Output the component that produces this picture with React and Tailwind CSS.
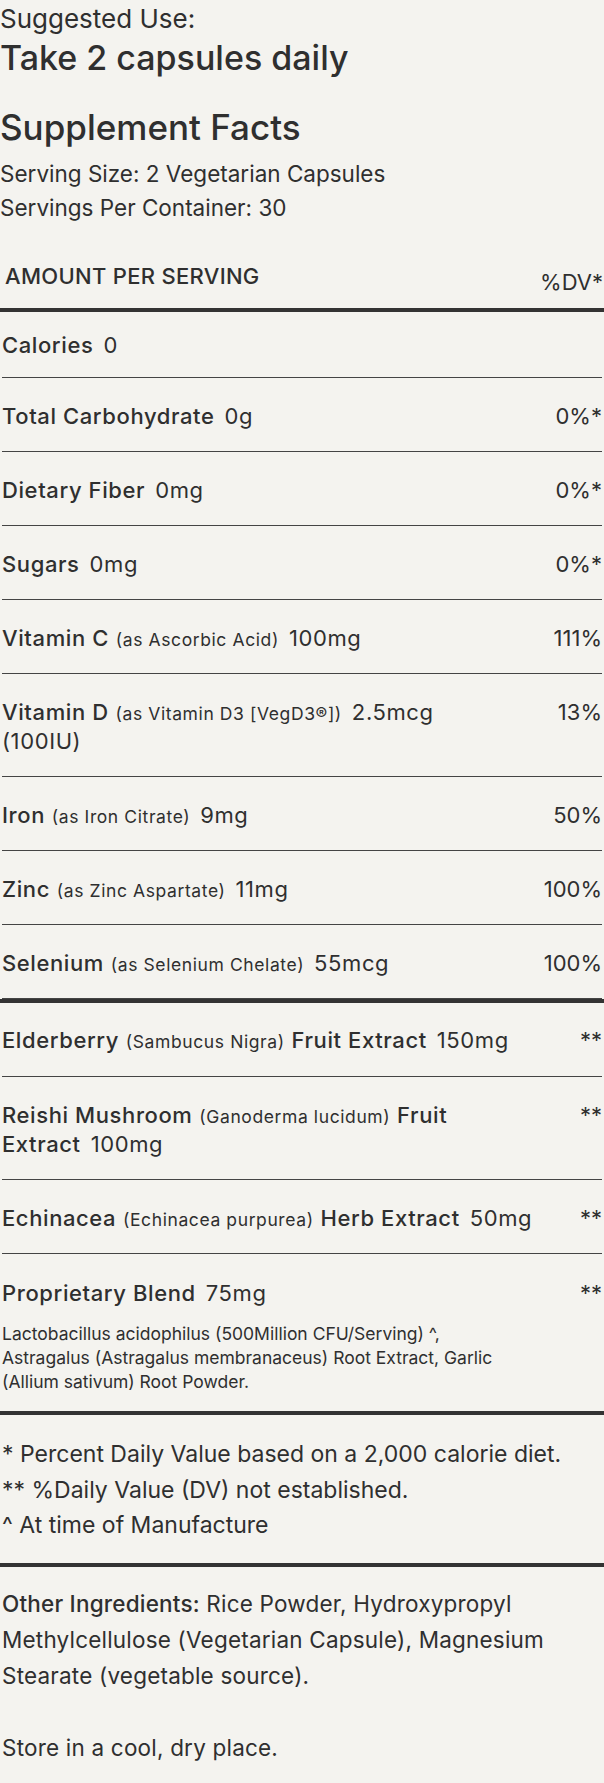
import React from "react";

const Row = ({ children, dv, className = "" }) => (
  <div
    className={`mx-[2px] flex items-start justify-between gap-4 border-b border-[#444] text-[22px] leading-[29px] tracking-[0.6px] ${className}`}
  >
    <div>{children}</div>
    <div className="shrink-0 text-right tracking-normal">{dv}</div>
  </div>
);

const Name = ({ children }) => <span className="font-medium">{children}</span>;
const Note = ({ children }) => <span className="text-[17.5px] leading-none">{children}</span>;
const Amt = ({ children }) => <span className="ml-[10px]">{children}</span>;

const ThickLine = () => <div className="h-[4px] bg-[#333]" />;

export default function App() {
  return (
    <div
      className="min-h-screen bg-[#f4f3ef] text-[#2f2f2f]"
      style={{ fontFamily: "Inter, 'Noto Sans', sans-serif" }}
    >
      {/* Suggested use */}
      <p className="pt-[4px] text-[26px] leading-[30px]">Suggested Use:</p>
      <p className="mt-[4px] text-[34px] leading-[40px] font-medium">Take 2 capsules daily</p>

      {/* Facts heading */}
      <h2 className="mt-[29px] text-[35px] leading-[40px] font-medium">Supplement Facts</h2>
      <div className="mt-[10px] text-[22.5px] leading-[34px]">
        <p>Serving Size: 2 Vegetarian Capsules</p>
        <p>Servings Per Container: 30</p>
      </div>

      <div className="mt-[38px] flex items-end justify-between pb-[13px] text-[22px] leading-[26px]">
        <span className="pl-[5px] pb-[6px] font-medium tracking-[0.3px]">AMOUNT PER SERVING</span>
        <span className="pr-[1px]">%DV*</span>
      </div>
      <ThickLine />

      <Row className="pt-[19px] pb-[17px]">
        <Name>Calories</Name>
        <Amt>0</Amt>
      </Row>
      <Row className="pt-[24px] pb-[20px]" dv="0%*">
        <Name>Total Carbohydrate</Name>
        <Amt>0g</Amt>
      </Row>
      <Row className="pt-[24px] pb-[20px]" dv="0%*">
        <Name>Dietary Fiber</Name>
        <Amt>0mg</Amt>
      </Row>
      <Row className="pt-[24px] pb-[20px]" dv="0%*">
        <Name>Sugars</Name>
        <Amt>0mg</Amt>
      </Row>
      <Row className="pt-[24px] pb-[20px]" dv="111%">
        <Name>Vitamin C</Name> <Note>(as Ascorbic Acid)</Note>
        <Amt>100mg</Amt>
      </Row>
      <Row className="pt-[24px] pb-[20px]" dv="13%">
        <Name>Vitamin D</Name> <Note>(as Vitamin D3 [VegD3®])</Note>
        <Amt>2.5mcg</Amt>
        <br />
        (100IU)
      </Row>
      <Row className="pt-[24px] pb-[20px]" dv="50%">
        <Name>Iron</Name> <Note>(as Iron Citrate)</Note>
        <Amt>9mg</Amt>
      </Row>
      <Row className="pt-[24px] pb-[20px]" dv="100%">
        <Name>Zinc</Name> <Note>(as Zinc Aspartate)</Note>
        <Amt>11mg</Amt>
      </Row>
      <Row className="pt-[24px] pb-[20px]" dv="100%">
        <Name>Selenium</Name> <Note>(as Selenium Chelate)</Note>
        <Amt>55mcg</Amt>
      </Row>
      <ThickLine />

      <Row className="pt-[23px] pb-[21px]" dv="**">
        <Name>Elderberry</Name> <Note>(Sambucus Nigra)</Note> <Name>Fruit Extract</Name>
        <Amt>150mg</Amt>
      </Row>
      <Row className="pt-[24px] pb-[20px]" dv="**">
        <Name>Reishi Mushroom</Name> <Note>(Ganoderma lucidum)</Note> <Name>Fruit</Name>
        <br />
        <Name>Extract</Name>
        <Amt>100mg</Amt>
      </Row>
      <Row className="pt-[24px] pb-[20px]" dv="**">
        <Name>Echinacea</Name> <Note>(Echinacea purpurea)</Note> <Name>Herb Extract</Name>
        <Amt>50mg</Amt>
      </Row>

      {/* Proprietary blend */}
      <div className="mx-[2px] pt-[25px] pb-[17px]">
        <div className="flex items-start justify-between text-[22px] leading-[29px] tracking-[0.6px]">
          <div>
            <Name>Proprietary Blend</Name>
            <Amt>75mg</Amt>
          </div>
          <span className="tracking-normal">**</span>
        </div>
        <p className="mt-[14px] text-[17.5px] leading-[24px]">
          Lactobacillus acidophilus (500Million CFU/Serving) ^,
          <br />
          Astragalus (Astragalus membranaceus) Root Extract, Garlic
          <br />
          (Allium sativum) Root Powder.
        </p>
      </div>
      <ThickLine />

      {/* Footnotes */}
      <div className="px-[2px] pt-[22px] pb-[19px] text-[23px] leading-[35.5px]">
        <p>* Percent Daily Value based on a 2,000 calorie diet.</p>
        <p>** %Daily Value (DV) not established.</p>
        <p>^ At time of Manufacture</p>
      </div>
      <ThickLine />

      <div className="px-[2px] pt-[19px] pb-[17px] text-[22.5px] leading-[36px] tracking-[0.2px]">
        <p>
          <span className="font-medium">Other Ingredients:</span> Rice Powder, Hydroxypropyl
          Methylcellulose (Vegetarian Capsule), Magnesium Stearate (vegetable source).
          <br />
          <br />
          Store in a cool, dry place.
        </p>
      </div>
    </div>
  );
}
